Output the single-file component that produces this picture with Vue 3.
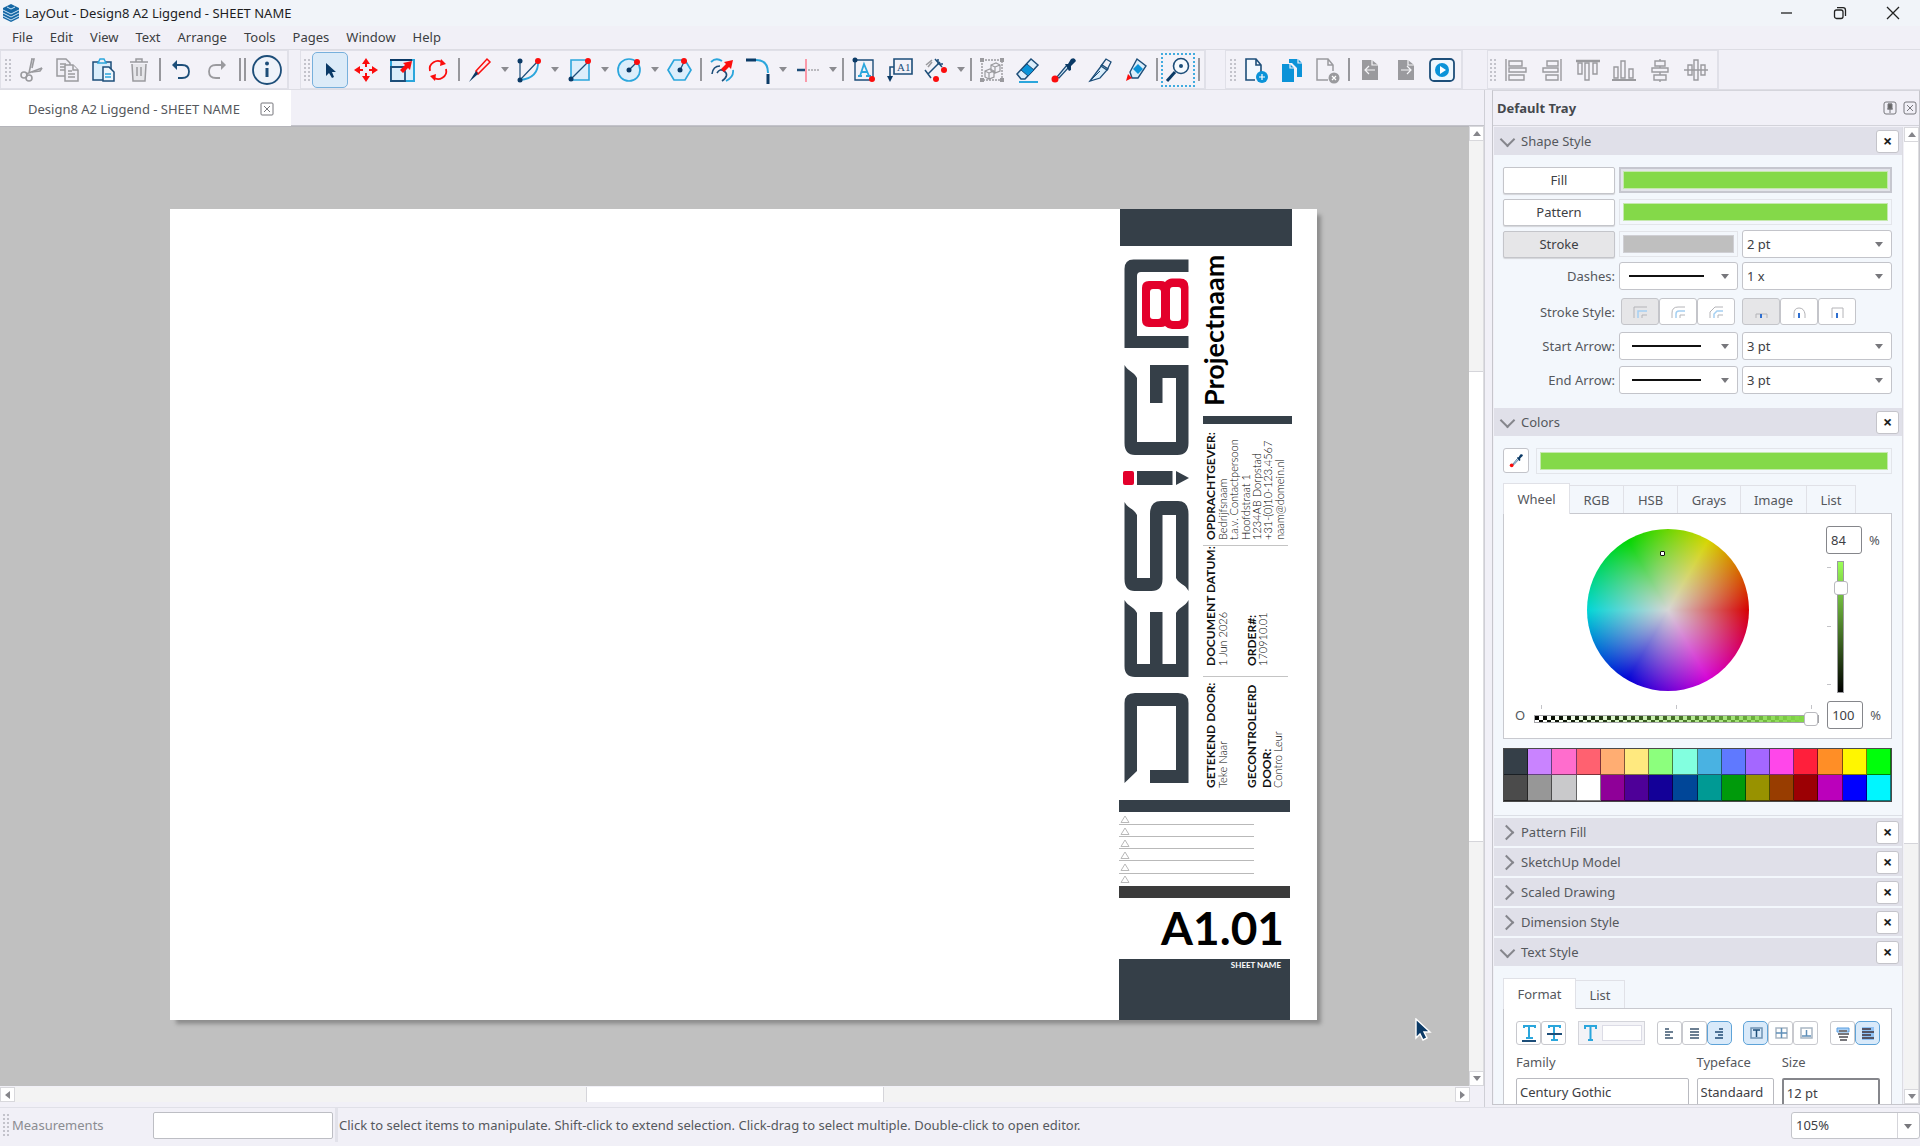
<script setup>
import { ref } from 'vue'

const navy = '#1d4e79'
const deep = '#0b3a66'
const sky = '#2ba6dc'
const pale = '#dbeefb'
const red = '#fb0d0d'
const gray = '#9a9a9e'

const dot = (x, y, c = red, r = 3) => `<circle cx="${x}" cy="${y}" r="${r}" fill="${c}" stroke="none"/>`

const icons = {
  cut: `<g stroke="${gray}" stroke-width="1.6"><path d="M15 3 12 17M25 12 9 18"/><circle cx="7" cy="19" r="3"/><circle cx="12" cy="22" r="3"/><path d="M14 3l3 0-2 9M25 12l-2 3-8 1"/></g>`,
  copy: `<g stroke="${gray}" stroke-width="1.5" fill="#f1f0f7"><path d="M4 3h9l4 4v13H4z"/><path d="M7 8h6M7 11h7M7 14h5"/><path d="M12 9h8l5 5v11H12z"/><path d="M20 9v5h5M15 15h4M15 18h7M15 21h7"/></g>`,
  paste: `<g stroke="${navy}" stroke-width="1.5" fill="${pale}"><path d="M4 6h18v18H4z" /><path d="M9 7l2-4h4l2 4z" fill="#f1f0f7" stroke="${sky}"/><path d="M14 11h6l5 5v9H14z" fill="#eef6fc"/><path d="M16 18h6M16 21h6" stroke="${sky}"/></g>`,
  trash: `<g stroke="${gray}" stroke-width="1.5"><path d="M5 6h18M11 6V3h6v3M7 8l1 17h12l1-17" fill="#e6e6ea"/><path d="M12 11v9M16 11v9"/></g>`,
  undo: `<path d="M8 9h7q7 0 7 6.500t-7 6.500h-4" stroke="${navy}" stroke-width="1.8"/><path d="M10 4 5 9l5 5z" fill="${navy}"/>`,
  redo: `<path d="M20 9h-7q-7 0-7 6.500t7 6.500h4" stroke="${gray}" stroke-width="1.8"/><path d="M18 4l5 5-5 5z" fill="${gray}"/>`,
  info: `<circle cx="15" cy="15" r="14" stroke="${navy}" stroke-width="1.8" fill="#eef3fa"/><path d="M15 13v9" stroke="${navy}" stroke-width="3"/>${dot(15, 8.5, navy, 2)}`,
  select: `<path d="M10 7v13l3-3 3 5 2-1-2-5h4z" fill="${deep}"/>`,
  move: `<g fill="${red}"><path d="M14 2l4 6h-3v3h-2V8h-3zM14 26l4-6h-3v-3h-2v3h-3zM2 14l6-4v3h3v2H8v3zM26 14l-6-4v3h-3v2h3v3z"/></g>`,
  scale: `<path d="M3 4h23v21H3z" stroke="${sky}" stroke-width="2" fill="${pale}"/><path d="M3 11v14h14V11z" stroke="${navy}" stroke-width="1.8" fill="${pale}"/><path d="M2 3h22v2H2z" fill="${deep}"/><path d="M24 5l-2 9-2-2-5 5-3-3 5-5-2-2z" fill="${red}"/>`,
  rotate: `<g stroke="${red}" stroke-width="1.8"><path d="M6 15a8 8 0 0 1 13-8M22 13a8 8 0 0 1-13 8"/><path d="M17 3l5 5-6 2zM11 25l-5-5 6-2z" fill="${red}" stroke="none"/></g>`,
  pencil: `<path d="M10 15 21 3l3 3-12 12z" stroke="${red}" stroke-width="1.5" fill="#fbe9ec"/><path d="M10 15l2 3-9 8z" fill="${deep}"/>`,
  arc: `<path d="M4 4v20M4 24 22 5" stroke="${navy}" stroke-width="1.2"/><path d="M22 5q1 17-18 19" stroke="${sky}" stroke-width="1.8"/>${dot(4, 5, deep, 2.5)}${dot(4, 24, deep, 2.5)}${dot(22, 5)}`,
  rect: `<path d="M5 4h18v20H5z" stroke="${sky}" stroke-width="1.6" fill="${pale}"/><path d="M5 23 22 6" stroke="${navy}" stroke-width="1.2"/>${dot(5, 23, deep, 2.5)}${dot(22, 5)}`,
  circle: `<circle cx="13" cy="14" r="11" stroke="${sky}" stroke-width="1.7" fill="${pale}"/><path d="M13 14l8-8" stroke="${navy}" stroke-width="1.2"/>${dot(13, 14, deep, 2.5)}${dot(21, 6)}`,
  polygon: `<path d="M8 4h11l6 10-6 10H8L2 14z" stroke="${sky}" stroke-width="1.7" fill="${pale}"/><path d="M14 14l4-8" stroke="${navy}" stroke-width="1.2"/>${dot(14, 14, deep, 2.5)}${dot(18, 5)}`,
  offset: `<path d="M3 6q5-5 11-1M25 14q1 7-7 11" stroke="${sky}" stroke-width="1.8"/><path d="M4 18q1-8 8-8M9 17q3-5 7-2 6 4-2 10" stroke="${navy}" stroke-width="1.6"/><path d="M25 4l-2 9-2-2-5 5-3-3 5-5-2-2z" fill="${red}"/>`,
  fillet: `<path d="M2 4h10M24 18v10" stroke="${deep}" stroke-width="3"/><path d="M12 4q12 0 12 13" stroke="${sky}" stroke-width="2"/>`,
  split: `<path d="M3 14h8" stroke="${navy}" stroke-width="2.5"/><path d="M12 3v23" stroke="#fb8fa0" stroke-width="1.8"/><path d="M14 14h12" stroke="#a8a8ac" stroke-width="1.4" stroke-dasharray="2 1"/>`,
  text: `<path d="M5 4h18v20H5z" stroke="${navy}" stroke-width="1.4"/><path d="M8 20h4M16 20h5M10 20l4-12 5 12M11 16h6" stroke="${sky}" stroke-width="1.8"/>${dot(5, 4, deep, 2.5)}${dot(22, 23)}`,
  label: `<path d="M8 3h18v15H8zM8 11H4v11" stroke="${navy}" stroke-width="1.6"/><path d="M1 20h6l-3 6z" fill="${deep}"/><text x="11" y="15" font-size="11" font-family="Liberation Serif, serif" fill="${navy}" stroke="none">A1</text>`,
  dimension: `<path d="M3 14l6 8M13 3l7 8M6 18 18 6M16 3l0 5 5 0" stroke="${navy}" stroke-width="1.5"/><path d="M4 9l6-5M6 11l4-5" stroke="${gray}" stroke-width="1.6"/>${dot(22, 14)}${dot(14, 23)}`,
  explode: `<path d="M4 4h20v20H4z" stroke="${gray}" stroke-width="1.4" stroke-dasharray="2 1"/><path d="M7 15l5-2 4 2v6l-5 2-4-2zM13 9l5-2 4 2v6l-5 2-4-2zM7 15l4 2v6M11 17l5-2M13 9l4 2v6M17 11l5-2" stroke="${gray}" stroke-width="1.2"/><g fill="${gray}"><path d="M2 2h4v4H2zM22 2h4v4h-4zM2 22h4v4H2zM22 22h4v4h-4z"/></g>`,
  eraser: `<path d="M3 18 17 3l7 6-13 14H7z" stroke="${navy}" stroke-width="1.5" fill="${pale}"/><path d="M7 14l6-6 7 6-6 6z" fill="#0b93d8" stroke="${navy}"/><path d="M5 26h19" stroke="${sky}" stroke-width="2"/>`,
  dropper: `<path d="M7 21 17 9l2 2L9 22z" stroke="${navy}" stroke-width="1.3" fill="${pale}"/><path d="M15 8l3 0 3-5q4-2 5 2l-5 5v4l-2 1z" fill="${deep}"/>${dot(5, 23, red, 3.5)}`,
  knife: `<path d="M4 25 16 9l6 4-8 9z" stroke="${navy}" stroke-width="1.3" fill="${pale}"/><path d="M15 10l5-7 5 3-4 8z" stroke="${navy}" stroke-width="1.3"/><path d="M4 25l10-10" stroke="${navy}"/>`,
  tag: `<path d="M8 16 15 3l9 7-8 12-6 0z" stroke="${navy}" stroke-width="1.4" fill="${pale}"/><path d="M11 13l5-5 5 5-5 5z" fill="#0b93d8"/><path d="M4 25l2-7 4 4z" fill="${red}"/>`,
  zoom: `<circle cx="17" cy="10" r="7.5" stroke="${navy}" stroke-width="1.6" fill="#f5f9fd"/><path d="M11 16 3 25" stroke="${deep}" stroke-width="3"/>${dot(17, 10, navy, 2)}`,
  addPage: `<path d="M19 19V9l-5-6H4v21h9M14 3v6h5" stroke="${navy}" stroke-width="1.6" fill="#f4f8fd"/>${dot(20, 21, '#0b93d8', 6)}<path d="M20 18v6M17 21h6" stroke="#fff" stroke-width="1.2"/>`,
  dupPage: `<path d="M11 3h9l4 4v14h-5V12l-5-5h-3z" fill="#0b93d8"/><path d="M4 8h8l4 4v14H4z" fill="#0b93d8"/><path d="M20 3v4h4M12 8v4h4" stroke="#f1f0f7" stroke-width="1.2"/>`,
  delPage: `<path d="M19 15V9l-5-6H3v21h11M14 3v6h5" stroke="${gray}" stroke-width="1.5"/>${dot(20, 22, gray, 5.5)}<path d="M18 20l4 4M22 20l-4 4" stroke="#fff" stroke-width="1.2"/>`,
  prevPage: `<path d="M6 4h10l6 5v15H6z" fill="${gray}"/><path d="M16 4v5h6M19 14H9M13 10l-4 4 4 4" stroke="#f5f5f8" stroke-width="1.2"/>`,
  nextPage: `<path d="M6 4h10l6 5v15H6z" fill="${gray}"/><path d="M16 4v5h6M9 14h10M15 10l4 4-4 4" stroke="#f5f5f8" stroke-width="1.2"/>`,
  play: `<rect x="2" y="3" width="24" height="22" rx="4" stroke="${navy}" stroke-width="1.8" fill="#eff7fd"/>${dot(14, 14, '#0b93d8', 7)}<path d="M12 10v8l6-4z" fill="#fff"/>`,
  alignLeft: `<g stroke="${gray}" stroke-width="1.4"><path d="M4 3v22M7 5h13v5H7zM7 12h17v4H7zM7 19h15v5H7z"/></g>`,
  alignRight: `<g stroke="${gray}" stroke-width="1.4"><path d="M23 3v22M9 5h11v5H9zM5 12h15v4H5zM8 19h12v5H8z"/></g>`,
  alignTop: `<g stroke="${gray}" stroke-width="1.4"><path d="M2 5h24" stroke-width="2.5"/><path d="M4 7h4v11H4zM11 7h4v17h-4zM19 7h4v11h-4z"/></g>`,
  alignBottom: `<g stroke="${gray}" stroke-width="1.4"><path d="M2 24h24" stroke-width="2"/><path d="M4 11h4v11H4zM11 5h4v17h-4zM19 13h4v9h-4z"/></g>`,
  alignCenter: `<g stroke="${gray}" stroke-width="1.4"><path d="M14 3v2M14 10v2M14 16v3M14 24v2M9 5h10v5H9zM6 12h16v4H6zM8 19h12v5H8z"/></g>`,
  alignMiddle: `<g stroke="${gray}" stroke-width="1.4"><path d="M2 14h24M6 9h4v10H6zM12 4h4v20h-4zM19 9h4v10h-4z"/></g>`
}

const menus = ['File', 'Edit', 'View', 'Text', 'Arrange', 'Tools', 'Pages', 'Window', 'Help']

const toolbars = [
  ['cut', 'copy', 'paste', 'trash', '|', 'undo', 'redo', '||', 'info'],
  ['select', 'move', 'scale', 'rotate', '|', 'pencil', 'v', 'arc', 'v', 'rect', 'v', 'circle', 'v', 'polygon', '|',
    'offset', 'fillet', 'v', 'split', 'v', '|', 'text', 'label', 'dimension', 'v', '|',
    'explode', 'eraser', 'dropper', 'knife', 'tag', '|', 'zoom', '|'],
  ['addPage', 'dupPage', 'delPage', '|', 'prevPage', 'nextPage', 'play'],
  ['alignLeft', 'alignRight', 'alignTop', 'alignBottom', 'alignCenter', 'alignMiddle']
]

const joins = [
  '<path d="M5 16V5h13" stroke="#b4b4b8"/><path d="M9 16V9h9" stroke="#a5d0f2" stroke-width="1.5"/><path d="M13 16v-3h5" stroke="#b4b4b8"/>',
  '<path d="M5 16v-5q0-6 6-6h7" stroke="#b4b4b8"/><path d="M9 16v-4q0-3 3-3h6" stroke="#a5d0f2" stroke-width="1.5"/><path d="M13 16v-3h5" stroke="#b4b4b8"/>',
  '<path d="M5 16v-6l5-5h8" stroke="#b4b4b8"/><path d="M9 16v-4l3-3h6" stroke="#a5d0f2" stroke-width="1.5"/><path d="M13 16v-3h5" stroke="#b4b4b8"/>'
]
const caps = [
  '<path d="M6 16v-4h11v4" stroke="#b4b4b8"/><path d="M11 12v4" stroke="#2f6fd0" stroke-width="2"/>',
  '<path d="M6 16v-4q0-6 5-6t6 6v4" stroke="#b4b4b8"/><path d="M11 11v5" stroke="#2f6fd0" stroke-width="2"/>',
  '<path d="M6 16V6h11v10" stroke="#b4b4b8"/><path d="M11 11v5" stroke="#2f6fd0" stroke-width="2"/>'
]

const colorTabs = ['Wheel', 'RGB', 'HSB', 'Grays', 'Image', 'List']
const palette = [
  '#353f48', '#c983ff', '#ff6dcd', '#ff6170', '#ffad72', '#ffe97f', '#8cff7d', '#82ffdf', '#49b2e2', '#5f79ff', '#a467ff', '#ff47ea', '#ff1f3b', '#ff8e26', '#fff600', '#00ff0b',
  '#4b4b4b', '#979797', '#c9c9cb', '#ffffff', '#8f0098', '#4e0098', '#130098', '#004698', '#009a94', '#009a0b', '#989200', '#983d00', '#9c0004', '#bb00bb', '#0000ff', '#00f6ff'
]
const closedPanels = ['Pattern Fill', 'SketchUp Model', 'Scaled Drawing', 'Dimension Style']

const bars = (rows) => rows.map(([x1, x2, y]) => `<path d="M${x1} ${y}h${x2 - x1}"/>`).join('')
const formatGroups = [
  [
    { on: false, art: `<g stroke="${sky}" stroke-width="2"><path d="M6 6V4h11v2M11 4v12M8 16h7"/><path d="M4 19h14" stroke="${navy}"/></g>` },
    { on: false, art: `<g stroke="${sky}" stroke-width="2"><path d="M6 6V4h11v2M11 4v14M8 18h7"/><path d="M4 12h15" stroke="${navy}"/></g>` }
  ],
  [
    { on: false, art: `<g stroke="#6c7f92" stroke-width="2">${bars([[7, 11, 7], [7, 15, 10], [7, 12, 13], [7, 15, 16]])}</g>` },
    { on: false, art: `<g stroke="#6c7f92" stroke-width="2">${bars([[7, 16, 7], [7, 16, 10], [7, 16, 13], [7, 16, 16]])}</g>` },
    { on: true, art: `<g stroke="#4f7396" stroke-width="2">${bars([[11, 15, 7], [7, 15, 10], [10, 15, 13], [7, 15, 16]])}</g>` }
  ],
  [
    { on: true, art: `<path d="M6 6h11v10H6z" stroke="#6f93b4" stroke-width="1.5"/><path d="M8 8h7M11.500 8v7" stroke="${navy}" stroke-width="1.5"/>` },
    { on: false, art: `<path d="M6 6h11v10H6z" stroke="#a9b6c3" stroke-width="1.5"/><path d="M6 11h11M11.500 6v10" stroke="#5f8fb8" stroke-width="1.5"/>` },
    { on: false, art: `<path d="M6 6h11v10H6z" stroke="#a9b6c3" stroke-width="1.5"/><path d="M7 14h9M11.500 8v6" stroke="#5f8fb8" stroke-width="1.5"/>` }
  ],
  [
    { on: false, art: `<path d="M5 6h12v4H5z" fill="#a8d0f7" stroke="#5d9fe0"/><g stroke="#77777c" stroke-width="2">${bars([[7, 15, 9], [6, 17, 12], [7, 16, 15], [8, 15, 18]])}</g>` },
    { on: true, art: `<path d="M5 5h12v13H5z" fill="#8fc2f5"/><g stroke="#556" stroke-width="2">${bars([[5, 14, 7], [5, 17, 10], [5, 14, 13], [5, 17, 16]])}</g>` }
  ]
]

const brightness = ref(84)
const opacity = ref(100)
const revisions = [0, 1, 2, 3, 4, 5]
const slate = '#353f48'
</script>

<template>
  <div class="app">
    <header class="titlebar">
      <svg class="logo" viewBox="0 0 18 18" width="18" height="18">
        <path d="M9 0l8 4v10l-8 4-8-4V4z" fill="#1467a5" />
        <path d="M1 6l8 4 8-4M1 9l8 4 8-4M1 12l8 4 8-4M5 3l4 2 4-2" fill="none" stroke="#cfe6f5" stroke-width="1" />
      </svg>
      <span class="title">LayOut - Design8 A2 Liggend - SHEET NAME</span>
      <div class="window-buttons">
        <button aria-label="Minimize"><svg viewBox="0 0 14 14" width="14" height="14"><path d="M1 7h11" /></svg></button>
        <button aria-label="Restore"><svg viewBox="0 0 14 14" width="14" height="14"><rect x="1.500" y="4" width="8.500" height="8.500" rx="2" /><path d="M4 1.700h6q2.500 0 2.500 2.500V10" /></svg></button>
        <button aria-label="Close"><svg viewBox="0 0 14 14" width="14" height="14"><path d="M1 1l12 12M13 1 1 13" /></svg></button>
      </div>
    </header>

    <nav class="menubar">
      <button v-for="m in menus" :key="m">{{ m }}</button>
    </nav>

    <div class="toolbars">
      <div v-for="(bar, b) in toolbars" :key="b" class="toolbar" :class="'bar' + b">
        <span class="grip"></span>
        <template v-for="(item, i) in bar" :key="i">
          <span v-if="item === '|'" class="sep"></span>
          <span v-else-if="item === '||'" class="sep double"></span>
          <button v-else-if="item === 'v'" class="more" aria-label="More tools"><i class="caret"></i></button>
          <button v-else-if="item === 'info'" class="tool" aria-label="info">
            <svg viewBox="0 0 30 30" width="30" height="30" fill="none" v-html="icons.info"></svg>
          </button>
          <button v-else class="tool" :class="item" :aria-label="item">
            <svg viewBox="0 0 28 28" width="28" height="28" fill="none" v-html="icons[item]"></svg>
          </button>
        </template>
      </div>
    </div>

    <div class="body">
      <main class="workspace">
        <div class="doc-tabs">
          <div class="doc-tab">
            <span>Design8 A2 Liggend - SHEET NAME</span>
            <button class="mini" aria-label="Close document"><svg viewBox="0 0 14 14" width="14" height="14"><rect x="1" y="1" width="12" height="12" rx="1" /><path d="M4 4l6 6M10 4l-6 6" /></svg></button>
          </div>
        </div>
        <div class="canvas-row">
          <div class="canvas">
            <svg class="sheet" viewBox="170 209 1147 811" width="1147" height="811">
              <g :fill="slate">
                <rect x="1120" y="209" width="172" height="37" />
                <path d="M1124.500 348V269q0-9.500 9-9.500h55V272H1141q-4 0-4 4v60h51.500v12z" />
                <path d="M1124.500 365c4 7 9 6 12.500 13v64h39v-64h-13.500v25H1150v-38h38.500v78q0 12-11 12H1135q-10.500 0-10.500-12z" />
                <rect x="1137" y="471" width="35.500" height="14" />
                <path d="M1176 471l13 7-13 7z" />
                <path d="M1124.500 502c4 7 9 6 12.500 13v63h13v-64q0-13 11-13h17q10.500 0 10.500 13v77c-4-8-9-6-12.500-13v-63h-13.500v64q0 12-11 12h-17q-10 0-10-12z" />
                <path d="M1124.500 600c4 7 9 6 12.500 13v51h13v-52h12.500v52H1176v-51c4-7 9-6 12.500-13v77H1135q-10.500 0-10.500-11z" />
                <path d="M1124.500 783v-80q0-10 10.500-10h43q10.500 0 10.500 10v80H1150v-13h26v-64h-39v65z" />
                <rect x="1203" y="416" width="89" height="8" />
                <rect x="1119" y="800" width="171" height="12" />
                <rect x="1119" y="959" width="171" height="61" />
              </g>
              <rect x="1119" y="886" width="171" height="12" fill="#3b3b3b" />
              <path fill="#e3002b" d="M1149 281h12q3 0 4 1 3-3.500 7-3.500h8q8.500 0 8.500 8.500v34q0 8-8.500 8h-8q-4 0-7-3-1 1-4 1h-12q-7 0-7-7v-32q0-7 7-7z" />
              <rect x="1123" y="471" width="11" height="14" rx="2" fill="#e3002b" />
              <g fill="#fff">
                <rect x="1150" y="289" width="11" height="30" rx="3" />
                <rect x="1170" y="287" width="11" height="34" rx="3" />
              </g>
              <g stroke="#c4c4c4" stroke-width="1">
                <path d="M1203 545.500h85M1203 676.500h85" />
              </g>
              <g fill="none" stroke="#b9b9b9">
                <path v-for="r in revisions" :key="r" :transform="`translate(1121 ${815 + r * 12})`" d="M4 1l4 6.500H0z" />
                <path d="M1119 824.500h135M1119 836.500h135M1119 848.500h135M1119 860.500h135M1119 873.500h135" />
              </g>
              <g class="vertical">
                <text class="project" transform="translate(1224 406) rotate(-90)">Projectnaam</text>
                <g class="head">
                  <text transform="translate(1215 540) rotate(-90)">OPDRACHTGEVER:</text>
                  <text transform="translate(1215 666) rotate(-90)">DOCUMENT DATUM:</text>
                  <text transform="translate(1256 666) rotate(-90)">ORDER#:</text>
                  <text transform="translate(1215 788) rotate(-90)">GETEKEND DOOR:</text>
                  <text transform="translate(1256 788) rotate(-90)">GECONTROLEERD</text>
                  <text transform="translate(1271 788) rotate(-90)">DOOR:</text>
                </g>
                <g class="detail">
                  <text transform="translate(1227 540) rotate(-90)">Bedrijfsnaam</text>
                  <text transform="translate(1238 540) rotate(-90)">t.a.v. Contactpersoon</text>
                  <text transform="translate(1250 540) rotate(-90)">Hoofdstraat 1</text>
                  <text transform="translate(1261 540) rotate(-90)">1234AB Dorpstad</text>
                  <text transform="translate(1272 540) rotate(-90)">+31-(0)10-123.4567</text>
                  <text transform="translate(1284 540) rotate(-90)">naam@domein.nl</text>
                  <text transform="translate(1227 666) rotate(-90)">1 Jun 2026</text>
                  <text transform="translate(1267 666) rotate(-90)">170910.01</text>
                  <text transform="translate(1227 788) rotate(-90)">Teke Naar</text>
                  <text transform="translate(1282 788) rotate(-90)">Contro Leur</text>
                </g>
              </g>
              <text class="number" x="1284" y="945">A1.01</text>
              <text class="sheet-name" x="1281" y="968">SHEET NAME</text>
            </svg>
            <svg class="cursor" viewBox="0 0 18 24" width="18" height="24">
              <path d="M2 1v19l4-4 3 6 4-2-3-6h6z" fill="#0b3a66" stroke="#fff" stroke-width="1.400" />
            </svg>
          </div>
          <div class="vscroll main-v">
            <button aria-label="Scroll up"><i class="tri up"></i></button>
            <span class="gap-a"></span><span class="thumb"></span><span class="gap-b"></span>
            <button aria-label="Scroll down"><i class="tri down"></i></button>
          </div>
        </div>
        <div class="hscroll">
          <button aria-label="Scroll left"><i class="tri left"></i></button>
          <span class="gap-a"></span><span class="thumb"></span><span class="gap-b"></span>
          <button aria-label="Scroll right"><i class="tri right"></i></button>
        </div>
      </main>

      <aside class="tray">
        <div class="tray-head">
          <h2>Default Tray</h2>
          <button class="mini" aria-label="Pin"><svg viewBox="0 0 14 14" width="14" height="14"><rect x="1" y="1" width="12" height="12" rx="2" /><path d="M5 3h4M4 8h6M7 8v4" /><path d="M5 3h4v5H5z" fill="#666" /></svg></button>
          <button class="mini" aria-label="Close tray"><svg viewBox="0 0 14 14" width="14" height="14"><rect x="1" y="1" width="12" height="12" rx="2" /><path d="M4 4l6 6M10 4l-6 6" /></svg></button>
        </div>
        <div class="tray-body">
          <div class="panels">
            <div class="panel-head">
              <button class="fold open">Shape Style</button>
              <button class="close" aria-label="Close Shape Style">×</button>
            </div>
            <div class="shape">
              <div class="row"><button class="push">Fill</button><button class="swatch sunk" aria-label="Fill color"><i></i></button></div>
              <div class="row"><button class="push">Pattern</button><button class="swatch" aria-label="Pattern color"><i></i></button></div>
              <div class="row">
                <button class="push on">Stroke</button><button class="swatch stroke" aria-label="Stroke color"><i></i></button>
                <div class="combo"><select aria-label="Stroke width"><option>2 pt</option></select></div>
              </div>
              <div class="row">
                <label for="dash">Dashes:</label>
                <div class="combo line long"><select id="dash"><option></option></select></div>
                <div class="combo"><select aria-label="Dash scale"><option>1 x</option></select></div>
              </div>
              <div class="row styles">
                <span class="label">Stroke Style:</span>
                <div class="seg"><button v-for="(j, i) in joins" :key="i" :class="{ on: i === 0 }" aria-label="Join"><svg viewBox="0 0 22 20" width="22" height="20" fill="none" v-html="j"></svg></button></div>
                <div class="seg"><button v-for="(c, i) in caps" :key="i" :class="{ on: i === 0 }" aria-label="Cap"><svg viewBox="0 0 22 20" width="22" height="20" fill="none" v-html="c"></svg></button></div>
              </div>
              <div class="row">
                <label for="sa">Start Arrow:</label>
                <div class="combo line"><select id="sa"><option></option></select></div>
                <div class="combo"><select aria-label="Start arrow size"><option>3 pt</option></select></div>
              </div>
              <div class="row last">
                <label for="ea">End Arrow:</label>
                <div class="combo line"><select id="ea"><option></option></select></div>
                <div class="combo"><select aria-label="End arrow size"><option>3 pt</option></select></div>
              </div>
            </div>

            <div class="panel-head">
              <button class="fold open">Colors</button>
              <button class="close" aria-label="Close Colors">×</button>
            </div>
            <div class="colors">
              <div class="pick">
                <button class="sample" aria-label="Sample color"><svg viewBox="0 0 28 28" width="15" height="15" fill="none" v-html="icons.dropper"></svg></button>
                <button class="swatch" aria-label="Current color"><i></i></button>
              </div>
              <div class="tabs">
                <button v-for="(t, i) in colorTabs" :key="t" :class="['t' + i, { active: i === 0 }]">{{ t }}</button>
              </div>
              <div class="wheel-box">
                <div class="wheel-row">
                  <div class="wheel"><i class="marker"></i></div>
                  <div class="value">
                    <div class="percent"><input v-model="brightness" type="text" aria-label="Brightness"><span>%</span></div>
                    <div class="bright"><span class="ticks"><i></i><i></i><i></i></span><input v-model="brightness" type="range" min="0" max="100" aria-label="Brightness slider"></div>
                  </div>
                </div>
                <div class="opacity-row">
                  <label for="op">O</label>
                  <div class="opac"><span class="ticks"><i></i><i></i><i></i></span><input id="op" v-model="opacity" type="range" min="0" max="100"></div>
                  <div class="percent"><input v-model="opacity" type="text" aria-label="Opacity"><span>%</span></div>
                </div>
              </div>
              <div class="palette"><button v-for="c in palette" :key="c" :style="{ background: c }" :aria-label="c"></button></div>
            </div>

            <div v-for="p in closedPanels" :key="p" class="panel-head stacked">
              <button class="fold">{{ p }}</button>
              <button class="close" :aria-label="'Close ' + p">×</button>
            </div>
            <div class="panel-head">
              <button class="fold open">Text Style</button>
              <button class="close" aria-label="Close Text Style">×</button>
            </div>
            <div class="text-style">
              <div class="tabs">
                <button class="f0 active">Format</button><button class="f1">List</button>
              </div>
              <div class="format">
                <div class="format-icons">
                  <template v-for="(g, gi) in formatGroups" :key="gi">
                    <div class="fgroup">
                      <button v-for="(f, i) in g" :key="i" :class="{ on: f.on }" aria-label="Format"><svg viewBox="0 0 22 22" width="22" height="22" fill="none" v-html="f.art"></svg></button>
                    </div>
                    <button v-if="gi === 0" class="text-color" aria-label="Text color">
                      <svg viewBox="0 0 18 22" width="18" height="22" fill="none" stroke="#2ba6dc" stroke-width="2"><path d="M4 7V4h11v3M9.500 4v14M7 18h5" /></svg><i></i>
                    </button>
                  </template>
                </div>
                <div class="fields">
                  <div class="family"><label for="fam">Family</label><input id="fam" type="text" value="Century Gothic"></div>
                  <div class="face"><label for="face">Typeface</label><input id="face" type="text" value="Standaard"></div>
                  <div class="size"><label for="size">Size</label><input id="size" type="text" value="12 pt"></div>
                </div>
              </div>
            </div>
          </div>
          <div class="vscroll tray-v">
            <button aria-label="Scroll up"><i class="tri up"></i></button>
            <span class="thumb"></span><span class="gap-b"></span>
            <button aria-label="Scroll down"><i class="tri down"></i></button>
          </div>
        </div>
      </aside>
    </div>

    <footer class="status">
      <div class="measure">
        <span class="grip"></span>
        <label for="meas">Measurements</label>
        <input id="meas" type="text">
      </div>
      <p>Click to select items to manipulate. Shift-click to extend selection. Click-drag to select multiple. Double-click to open editor.</p>
      <div class="combo zoom-level"><select aria-label="Zoom"><option>105%</option></select></div>
    </footer>
  </div>
</template>

<style>
body { margin: 0; }
</style>

<style scoped>
* { box-sizing: border-box; }
.app { display: flex; flex-direction: column; height: 100vh; overflow: hidden; background: #f1f0f7; color: #55585d; font: 13px/20px "Noto Sans", "Open Sans", sans-serif; }
button, input, select { font: inherit; color: inherit; margin: 0; padding: 0; border: 0; background: none; border-radius: 0; outline: 0; }
button { display: flex; align-items: center; justify-content: center; flex: none; }
svg { display: block; flex: none; }

.titlebar { display: flex; align-items: center; height: 26px; padding-left: 2px; background: #f1f4f9; flex: none; }
.title { margin-left: 5px; color: #1d1d1f; }
.window-buttons { display: flex; margin-left: auto; padding-right: 1px; }
.window-buttons button { width: 53px; height: 26px; }
.window-buttons svg { fill: none; stroke: #222; stroke-width: 1.3; }
.menubar { display: flex; align-items: center; gap: 17px; height: 23px; padding: 0 0 2px 12px; flex: none; color: #3c3e42; }

.toolbars { display: flex; height: 41px; border-top: 1px solid #dddde4; border-bottom: 1px solid #dddde4; flex: none; }
.toolbar { display: flex; align-items: center; border: 1px solid #e0e0e8; border-width: 1px 2px 1px 1px; background: #f3f2f8; }
.bar0 { width: 289px; margin-right: 11px; padding-left: 2px; }
.bar1 { width: 906px; margin-right: 19px; padding-left: 1px; }
.bar2 { width: 238px; margin-right: 24px; padding-left: 2px; }
.bar3 { width: 232px; padding-left: 0; }
.grip { width: 6px; height: 22px; margin: 0 2px; flex: none; background: radial-gradient(circle at 1px 1px, #c3c3cb 1px, transparent 1px) 0 0 / 4px 4px; }
.tool { width: 36px; height: 36px; }
.tool.select { border: 1px solid #77b0dc; border-radius: 5px; background: #dcebf8; }
.tool.zoom { height: 34px; width: 34px; margin: 0 1px; border: 2px dotted #41abdf; }
.sep { width: 6px; height: 23px; flex: none; background: linear-gradient(#97979c, #97979c) center / 2px 100% no-repeat; }
.sep.double { width: 14px; background: linear-gradient(#97979c, #97979c) 4px 0 / 2px 100% no-repeat, linear-gradient(#97979c, #97979c) 9px 0 / 2px 100% no-repeat; }
.more { width: 14px; height: 30px; }
.caret { border: 4px solid transparent; border-top: 5px solid #8b8b90; border-bottom: 0; }

.body { display: flex; flex: 1; min-height: 0; }
.workspace { display: flex; flex-direction: column; flex: 1; min-width: 0; border-right: 1px solid #cfcfd6; }
.doc-tabs { display: flex; height: 36px; flex: none; border-bottom: 1px solid #c3c3ca; }
.doc-tab { display: flex; align-items: center; justify-content: space-between; width: 291px; height: 36px; padding: 2px 17px 0 28px; background: #fff; }
.mini { width: 14px; height: 14px; }
.mini svg { fill: none; stroke: #77777c; }
.canvas-row { display: flex; flex: 1; min-height: 0; }
.canvas { position: relative; flex: 1; min-width: 0; overflow: hidden; background: #c0c0c0; border-top: 1px solid #b5b5ba; }
.sheet { position: absolute; left: 170px; top: 82px; background: #fff; box-shadow: 5px 5px 4px -1px #8d8d8d; }
.cursor { position: absolute; left: 1414px; top: 891px; }
.vertical { fill: #000; }
.project { font: 700 27px "Century Gothic", Lato, sans-serif; }
.head { font: 700 12px "Century Gothic", Lato, sans-serif; fill: #111; }
.detail { font: 300 11px "Century Gothic", Lato, sans-serif; fill: #000; }
.number { font: 700 46px "Century Gothic", Lato, sans-serif; text-anchor: end; }
.sheet-name { font: 700 8px "Century Gothic", Lato, sans-serif; text-anchor: end; fill: #fff; }

.vscroll { display: flex; flex-direction: column; width: 15px; flex: none; background: #f3f3f3; border-right: 1px solid #dddde0; }
.vscroll button, .hscroll button { width: 15px; height: 15px; background: #fff; border: 1px solid #d8d8dc; }
.vscroll .thumb, .hscroll .thumb { background: #fff; border: 0 solid #d5d5da; }
.main-v .gap-a { flex: 230; }
.main-v .thumb { flex: 470; border-width: 1px 0; }
.main-v .gap-b { flex: 229; }
.hscroll { display: flex; width: 1470px; max-width: 100%; height: 15px; flex: none; margin: 1px 0 5px; background: #f3f3f3; }
.hscroll .gap-a { flex: 571; }
.hscroll .thumb { flex: 296; border-width: 0 1px; }
.hscroll .gap-b { flex: 571; }
.tri { border: 4px solid transparent; }
.up { border-bottom: 5px solid #85858a; border-top: 0; }
.down { border-top: 5px solid #85858a; border-bottom: 0; }
.left { border-right: 5px solid #85858a; border-left: 0; }
.right { border-left: 5px solid #85858a; border-right: 0; }

.tray { display: flex; flex-direction: column; width: 428px; margin-left: 7px; margin-bottom: 2px; flex: none; border: 1px solid #c6c6cc; border-top-color: #d5d5dc; }
.tray-head { display: flex; align-items: center; gap: 6px; height: 35px; padding: 0 2px 0 4px; flex: none; border-bottom: 1px solid #d3d3da; }
h2 { margin: 0 auto 0 0; font-size: 13px; line-height: 20px; color: #45484d; }
.tray-body { display: flex; flex: 1; min-height: 0; }
.panels { flex: 1; min-width: 0; margin: 1px 1px 0; overflow: hidden; background: #f3f7fc; border-right: 1px solid #dcdce2; }
.tray-v { margin-top: 1px; }
.tray-v .thumb { flex: 700; border-bottom-width: 1px; }
.tray-v .gap-b { flex: 245; }

.panel-head { display: flex; align-items: center; height: 28px; padding: 0 3px 0 27px; background: #e0e0e9; }
.panel-head.stacked { margin-bottom: 2px; }
.fold { position: relative; flex: 1; justify-content: flex-start; text-align: left; height: 28px; }
.fold::before { content: ""; position: absolute; left: -20px; top: 9px; width: 9px; height: 9px; border: solid #85868c; border-width: 0 2px 2px 0; transform: rotate(-45deg); }
.fold.open::before { left: -19px; top: 7px; transform: rotate(45deg); }
.close { width: 23px; height: 23px; border: 1px solid #c4c4ca; border-radius: 3px; background: #fff; color: #1c1c1c; font-weight: 700; font-size: 16px; line-height: 16px; }

.shape { display: flex; flex-direction: column; gap: 4px; padding: 11px 10px 14px 9px; }
.row { display: flex; align-items: center; gap: 4px; height: 28px; }
.row.styles { margin: 4px 0 3px; height: 27px; }
.row.last { margin-top: 2px; }
.row label, .row .label { width: 112px; text-align: right; flex: none; }
.push { width: 112px; height: 27px; border: 1px solid #c4c5ca; border-radius: 2px; background: #fff; box-shadow: 0 1px 1px #d3d4d9; color: #3d4044; }
.push.on { background: #e6e6e8; }
.swatch { flex: 1; height: 26px; padding: 3px; border: 1px solid #e3e5ea; }
.swatch i { width: 100%; height: 100%; background: #84d949; border: 1px solid #c5e9ae; }
.swatch.sunk { border: 2px solid #c6c7cf; padding: 2px; background: #e3e4ea; }
.swatch.stroke { flex: 0 0 119px; }
.swatch.stroke i { background: #bfbfbf; border-color: #cfcfd4; }
.combo { position: relative; flex: 1; height: 28px; }
.combo.line { flex: 0 0 119px; }
.combo select { width: 100%; height: 100%; padding: 0 20px 0 4px; appearance: none; border: 1px solid #c3c4ca; border-radius: 3px; background: #fff; color: #3d4044; }
.combo::after { content: ""; position: absolute; right: 9px; top: 12px; border: 4px solid transparent; border-top: 5px solid #77777c; border-bottom: 0; pointer-events: none; }
.combo.line::before { content: ""; position: absolute; left: 13px; top: 13px; width: 69px; height: 2px; background: #111; pointer-events: none; }
.combo.long::before { left: 10px; width: 75px; }
.seg { display: flex; padding-left: 2px; }
.seg + .seg { padding-left: 0; margin-left: 3px; }
.seg button { width: 38px; height: 27px; border: 1px solid #c4c5ca; border-radius: 3px; background: #fff; }
.seg button.on { background: #e6e6e8; }

.colors { padding: 12px 10px 13px 9px; border-bottom: 1px solid #dcdfe6; }
.pick { display: flex; gap: 7px; height: 25px; }
.sample { width: 26px; height: 25px; border: 1px solid #c3c4ca; border-radius: 3px; background: #fff; }
.tabs { display: flex; align-items: flex-end; height: 31px; }
.colors .tabs { margin-top: 9px; }
.tabs button { height: 28px; border: 1px solid #e0e1e7; border-width: 1px 1px 0 0; }
.tabs button.active { height: 31px; margin-bottom: -1px; border-left-width: 1px; background: #fff; z-index: 1; }
.t0 { width: 67px; } .t1 { width: 54px; } .t2 { width: 54px; } .t3 { width: 63px; } .t4 { width: 66px; } .t5 { width: 49px; }
.wheel-box { height: 226px; padding: 12px 10px 0 11px; background: #fff; border: 1px solid #c8c9cf; }
.wheel-row { display: flex; height: 175px; }
.wheel { position: relative; width: 162px; height: 162px; margin: 3px 77px 0 72px; border-radius: 50%; flex: none; background: radial-gradient(closest-side, #d6d6d6, rgba(214, 214, 214, 0)), conic-gradient(from 90deg, #d60000, #d600d6, #0000d6, #00d6d6, #00d600, #d6d600, #d60000); }
.marker { position: absolute; left: 73px; top: 22px; width: 5px; height: 5px; border: 1px solid #111; border-radius: 1px; background: #fff; }
.percent { display: flex; align-items: center; gap: 7px; }
.percent input { width: 36px; height: 28px; padding-left: 4px; border: 1px solid #85868b; border-radius: 3px; background: #fff; color: #3d4044; }
.bright { display: flex; margin-top: 7px; height: 132px; }
.bright .ticks { display: flex; flex-direction: column; justify-content: space-between; width: 4px; margin: 6px 2px 8px 1px; }
.bright .ticks i { height: 1px; background: #c4c4c8; }
input[type="range"] { appearance: none; display: block; background: none; }
.bright input { width: 14px; height: 132px; writing-mode: vertical-lr; direction: rtl; }
.bright input::-webkit-slider-runnable-track { width: 7px; height: 132px; border: 1px solid #9a9a9e; background: linear-gradient(#9bff56, #000); }
.bright input::-webkit-slider-thumb { appearance: none; width: 14px; height: 14px; margin-left: -4px; border: 1px solid #b9b9be; border-radius: 3px; background: #fff; }
.opacity-row { display: flex; align-items: center; height: 28px; }
.opacity-row > label { width: 19px; }
.opac { flex: 1; margin-right: 8px; }
.opac .ticks { display: flex; justify-content: space-between; height: 4px; margin: 0 7px 3px 7px; }
.opac .ticks i { width: 1px; background: #c4c4c8; }
.opac input { width: 100%; height: 14px; }
.opac input::-webkit-slider-runnable-track { height: 8px; border: 1px solid #a5a5a9; background: linear-gradient(90deg, rgba(132, 217, 73, 0), #84d949 95%), conic-gradient(#fff 25%, #000 0 50%, #fff 0 75%, #000 0) 0 0 / 8px 8px; }
.opac input::-webkit-slider-thumb { appearance: none; width: 14px; height: 14px; margin-top: -4px; border: 1px solid #b9b9be; border-radius: 3px; background: #fff; }
.palette { display: grid; grid-template-columns: repeat(16, 1fr); grid-auto-rows: 26px; margin-top: 9px; border: 1px solid #4a4a4a; }
.palette button { border: 1px solid rgba(0, 0, 0, 0.5); border-width: 0 1px 1px 0; }
.colors + .panel-head { margin-top: 2px; }

.text-style { padding: 11px 10px 0 9px; }
.f0 { width: 73px; } .f1 { width: 49px; }
.format { height: 160px; padding: 12px 11px 0 12px; background: #fff; border: 1px solid #c8c9cf; }
.format-icons { display: flex; justify-content: space-between; }
.fgroup { display: flex; }
.fgroup button { width: 25px; height: 24px; border: 1px solid #c8c9ce; border-radius: 3px; background: #fff; }
.fgroup button.on { border-color: #5ea3d8; border-radius: 5px; background: #d9eafa; }
.text-color { width: 67px; height: 24px; border: 1px solid #d3d4da; background: #f3f3f7; gap: 3px; }
.text-color i { width: 40px; height: 16px; background: #fff; border: 1px solid #dcdce6; }
.fields { display: flex; gap: 8px; margin-top: 7px; }
.fields > div { display: flex; flex-direction: column; gap: 6px; }
.fields input { height: 28px; width: 100%; padding-left: 3px; border: 1px solid #b9bac0; border-radius: 2px; color: #3d4044; }
.family { flex: 172; } .face { flex: 77; } .size { flex: 98; }
.fields .size input { height: 30px; border: 2px solid #85868b; }

.status { display: flex; align-items: center; height: 39px; padding-bottom: 4px; border-top: 1px solid #e0e0e8; flex: none; }
.measure { display: flex; align-items: center; width: 338px; height: 34px; padding-left: 1px; border-right: 3px solid #e2e2ea; color: #8b8c91; }
.measure label { width: 142px; padding-left: 1px; }
.measure input { width: 180px; height: 27px; border: 1px solid #bdbec4; border-radius: 2px; background: #fff; }
.status p { margin: 0 auto 0 1px; white-space: nowrap; }
.zoom-level { flex: 0 0 129px; height: 27px; }
.zoom-level::before { content: ""; position: absolute; right: 22px; top: 1px; bottom: 1px; width: 1px; background: #d5d5da; }
.zoom-level::after { right: 8px; }
</style>
